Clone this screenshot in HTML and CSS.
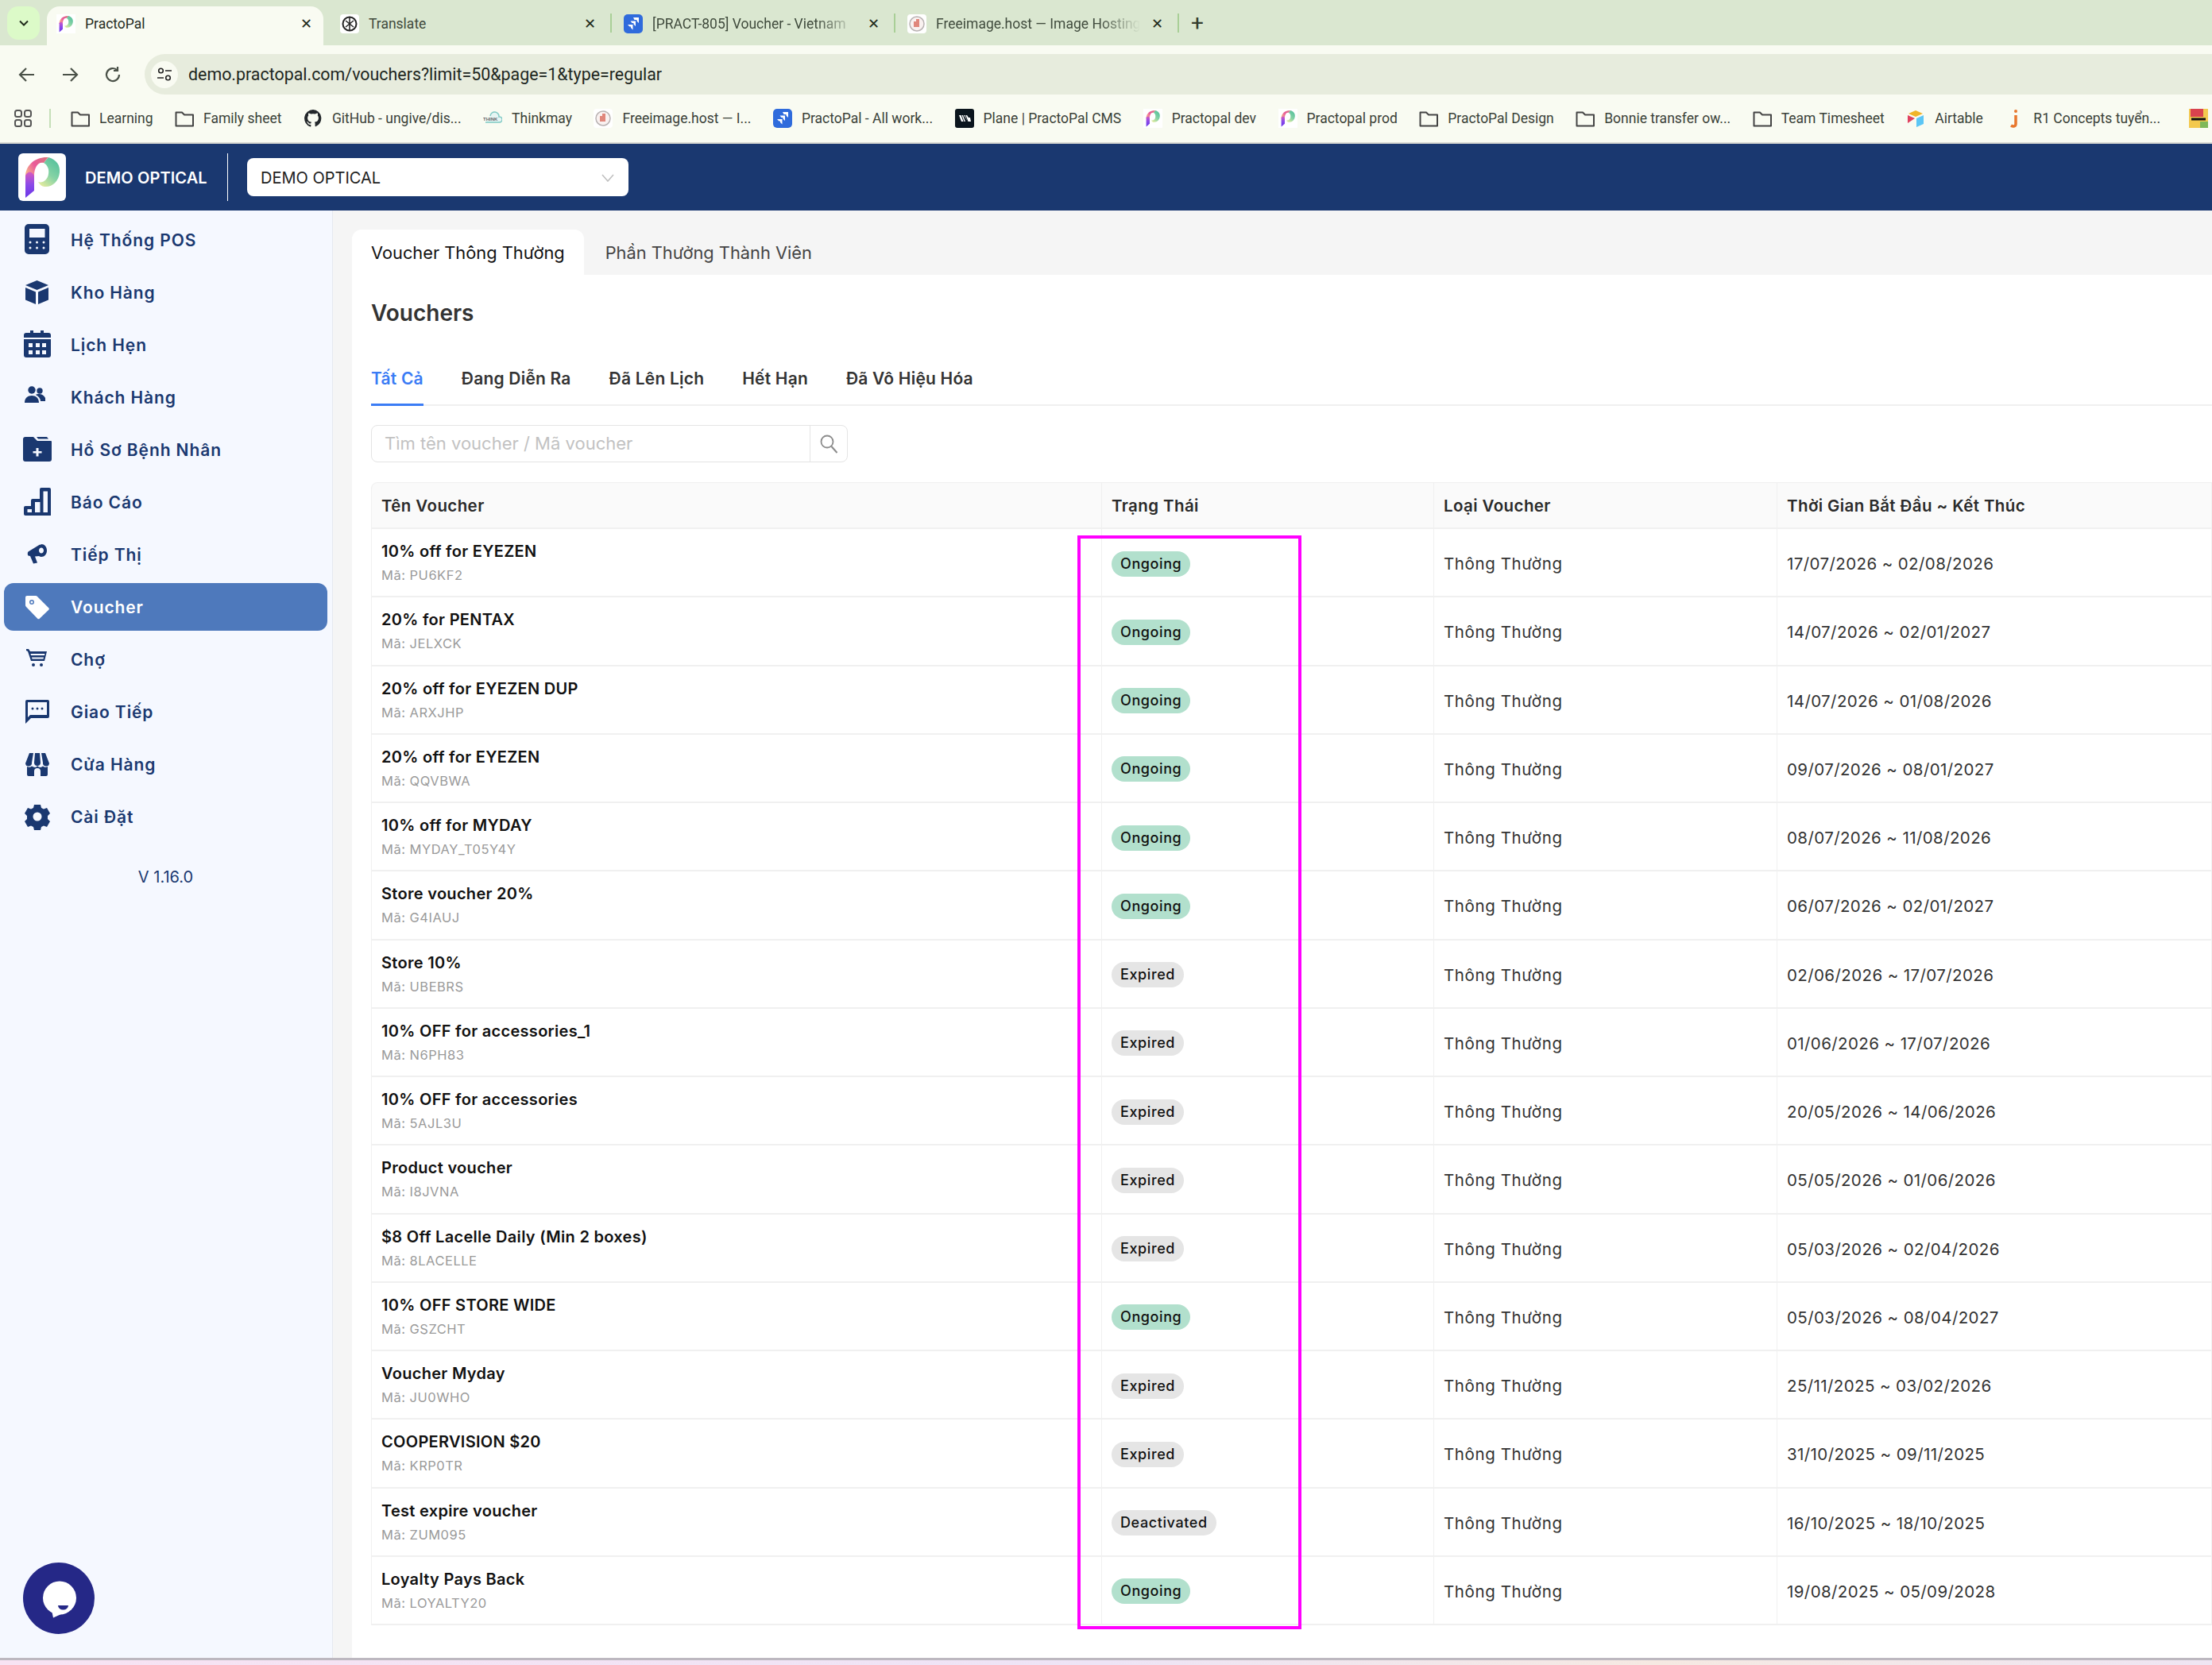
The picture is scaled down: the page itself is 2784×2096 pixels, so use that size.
FILE: index.html
```html
<!DOCTYPE html>
<html lang="vi">

<head>
    <meta charset="UTF-8">
    <title>PractoPal</title>
    <link rel="stylesheet" href="styles.css">
</head>

<body>
    <svg class="defs" width="0" height="0">
        <defs>
            <linearGradient id="pp" x1="0" y1="0.600" x2="1" y2="0.200">
                <stop offset="0" stop-color="#f4a98c" />
                <stop offset="0.400" stop-color="#ea5a9a" />
                <stop offset="1" stop-color="#d8737f" />
            </linearGradient>
            <linearGradient id="pp2" x1="0" y1="0" x2="0" y2="1">
                <stop offset="0" stop-color="#d65ac0" />
                <stop offset="0.500" stop-color="#8a4ae8" />
                <stop offset="1" stop-color="#6a35e8" />
            </linearGradient>
            <linearGradient id="pp3" x1="0.800" y1="0" x2="0.200" y2="1">
                <stop offset="0" stop-color="#52bf9c" />
                <stop offset="0.550" stop-color="#86d3a5" />
                <stop offset="1" stop-color="#e3eb9f" />
            </linearGradient>
            <symbol id="logo" viewBox="0 0 60 60">
                <path d="M38 5C48 8 53 15 52 24C51 35 43 43 33 42C30 42 27 39 25 36C31 38 37 33 38 26C39 20 37 15 32 12Z" fill="url(#pp3)" />
                <path d="M9 28C10 14 22 4 38 5C36 7 34 9 32 12C25 10 20 18 20 28Z" fill="url(#pp)" />
                <path d="M9 28C12 22 17 22 20 28V47L9 56Z" fill="url(#pp2)" />
            </symbol>
            <symbol id="folder" viewBox="0 0 24 24">
                <path d="M1.500 4.500h7.500l3 3h11v14h-21.500z" fill="none" stroke="#444" stroke-width="2" stroke-linejoin="round" />
            </symbol>
            <symbol id="jira" viewBox="0 0 24 24">
                <rect width="24" height="24" rx="5" fill="#2f6bdc" />
                <path d="M12 4h7v7l-2.500-2.500V7h-3zM8.500 8.500H15v6.500l-2.500-2.500V11h-2zM5 13h6.500v6.500L9 17v-1.500H7.500z" fill="#fff" />
            </symbol>
            <symbol id="freeimage" viewBox="0 0 24 24">
                <rect width="24" height="24" rx="4" fill="#fff" />
                <circle cx="12" cy="12" r="9" fill="#f9f1f0" stroke="#b9b3b3" stroke-width="1.500" />
                <path d="M8 16V9h3V6h4v10z" fill="#e0877c" />
            </symbol>
        </defs>
    </svg>

    <div class="tabstrip">
        <div class="tab-search"><svg width="16" height="16" viewBox="0 0 16 16"><path d="M3 5.500l5 5 5-5" fill="none" stroke="#1f2a1a" stroke-width="2" /></svg></div>
        <div class="tab tab-active">
            <svg class="favicon" width="24" height="24"><rect width="24" height="24" fill="#fff" /><use href="#logo" width="24" height="24" /></svg>
            <span class="tab-title">PractoPal</span>
            <span class="tab-close">✕</span>
        </div>
        <div class="tab">
            <svg class="favicon" width="24" height="24" viewBox="0 0 24 24"><rect width="24" height="24" rx="4" fill="#fff" /><circle cx="12" cy="12" r="8.500" fill="none" stroke="#222" stroke-width="2" /><path d="M7 8l10 8M17 8l-10 8M12 4v16" stroke="#222" stroke-width="1.500" /></svg>
            <span class="tab-title">Translate</span>
            <span class="tab-close">✕</span>
        </div>
        <div class="tab tab-sep">
            <svg class="favicon" width="24" height="24"><use href="#jira" /></svg>
            <span class="tab-title tab-fade">[PRACT-805] Voucher - Vietnam</span>
            <span class="tab-close">✕</span>
        </div>
        <div class="tab tab-sep">
            <svg class="favicon" width="24" height="24"><use href="#freeimage" /></svg>
            <span class="tab-title tab-fade">Freeimage.host — Image Hosting</span>
            <span class="tab-close">✕</span>
        </div>
        <div class="tab-new">+</div>
    </div>

    <div class="toolbar">
        <svg class="nav-icon" width="24" height="24" viewBox="0 0 24 24"><path d="M21 12H4M11 4l-8 8 8 8" fill="none" stroke="#4a5148" stroke-width="2.200" /></svg>
        <svg class="nav-icon" width="24" height="24" viewBox="0 0 24 24"><path d="M3 12h17M13 4l8 8-8 8" fill="none" stroke="#4a5148" stroke-width="2.200" /></svg>
        <svg class="nav-icon" width="24" height="24" viewBox="0 0 24 24"><path d="M20 12a8 8 0 1 1-2.500-5.800M18 2v5h-5" fill="none" stroke="#4a5148" stroke-width="2.200" /></svg>
        <div class="address">
            <div class="site-info"><svg width="20" height="20" viewBox="0 0 20 20"><circle cx="5.500" cy="5" r="2.800" fill="none" stroke="#222" stroke-width="1.600" /><path d="M11 5h8M1 14h8" stroke="#222" stroke-width="1.600" /><circle cx="14.500" cy="14" r="2.800" fill="none" stroke="#222" stroke-width="1.600" /></svg></div>
            <span class="url">demo.practopal.com/vouchers?limit=50&amp;page=1&amp;type=regular</span>
        </div>
    </div>

    <div class="bookmarks">
        <svg class="apps" width="22" height="22" viewBox="0 0 22 22"><g fill="none" stroke="#555" stroke-width="2"><rect x="1" y="1" width="8" height="8" rx="2.500" /><rect x="13" y="1" width="8" height="8" rx="2.500" /><rect x="1" y="13" width="8" height="8" rx="2.500" /><rect x="13" y="13" width="8" height="8" rx="2.500" /></g></svg>
        <span class="bm-sep"></span>
        <a class="bm"><svg width="24" height="24"><use href="#folder" /></svg>Learning</a>
        <a class="bm"><svg width="24" height="24"><use href="#folder" /></svg>Family sheet</a>
        <a class="bm"><svg width="24" height="24" viewBox="0 0 24 24"><path d="M12 1a11 11 0 0 0-3.500 21.400c.6.100.8-.2.800-.5v-2c-3 .7-3.700-1.400-3.700-1.400-.5-1.300-1.200-1.600-1.200-1.600-1-.7.100-.7.100-.7 1.100.1 1.700 1.100 1.700 1.100 1 1.700 2.600 1.200 3.200.9.100-.7.400-1.200.7-1.500-2.400-.3-5-1.200-5-5.400 0-1.200.4-2.100 1.100-2.900-.1-.3-.5-1.400.1-2.900 0 0 .9-.3 3 1.100a10.400 10.400 0 0 1 5.400 0c2.100-1.400 3-1.100 3-1.100.6 1.500.2 2.600.1 2.900.7.800 1.100 1.700 1.100 2.900 0 4.200-2.600 5.100-5 5.400.4.300.7 1 .7 2v3c0 .3.200.6.800.5A11 11 0 0 0 12 1z" fill="#23272b" /></svg>GitHub - ungive/dis...</a>
        <a class="bm"><svg width="24" height="24" viewBox="0 0 24 24"><path d="M9 9a5 5 0 0 1 11 1 3.500 3.500 0 0 1 1 7H3" fill="#e6f5f3" stroke="#7fc9c4" stroke-width="1.500" /><text x="0" y="15" class="think">THINK</text></svg>Thinkmay</a>
        <a class="bm"><svg width="24" height="24"><use href="#freeimage" /></svg>Freeimage.host — I...</a>
        <a class="bm"><svg width="24" height="24"><use href="#jira" /></svg>PractoPal - All work...</a>
        <a class="bm"><svg width="24" height="24" viewBox="0 0 24 24"><rect width="24" height="24" rx="3" fill="#0b151d" /><path d="M5 8h5l3 8H8zM11 8h4l2 3h2l1 5h-4z" fill="#fff" /><path d="M8 8l3 8M13 8l3 8" stroke="#0b151d" /></svg>Plane | PractoPal CMS</a>
        <a class="bm"><svg width="24" height="24"><rect width="24" height="24" fill="#fff" /><use href="#logo" width="24" height="24" /></svg>Practopal dev</a>
        <a class="bm"><svg width="24" height="24"><rect width="24" height="24" fill="#fff" /><use href="#logo" width="24" height="24" /></svg>Practopal prod</a>
        <a class="bm"><svg width="24" height="24"><use href="#folder" /></svg>PractoPal Design</a>
        <a class="bm"><svg width="24" height="24"><use href="#folder" /></svg>Bonnie transfer ow...</a>
        <a class="bm"><svg width="24" height="24"><use href="#folder" /></svg>Team Timesheet</a>
        <a class="bm"><svg width="24" height="24" viewBox="0 0 24 24"><path d="M12 2l9 4-9 4-9-4z" fill="#f0b429" /><path d="M13 12l9-4v11l-9 4z" fill="#5cc6f5" /><path d="M2 8l9 4-9 6z" fill="#e0415f" /></svg>Airtable</a>
        <a class="bm"><svg width="24" height="24" viewBox="0 0 24 24"><path d="M14 8v11c0 3-3 4-6 2" fill="none" stroke="#e8772e" stroke-width="3.500" /><circle cx="14" cy="3" r="2" fill="#e8772e" /></svg>R1 Concepts tuyển...</a>
        <svg class="bm-last" width="24" height="24" viewBox="0 0 24 24"><rect width="24" height="24" fill="#f3c94f" /><rect width="16" height="10" x="2" fill="#d9434e" /><rect width="10" height="8" x="14" y="16" fill="#7fb85a" /><path d="M3 13h18" stroke="#111" stroke-width="3" /></svg>
    </div>

    <header class="topbar">
        <div class="brand-logo"><svg width="60" height="60"><use href="#logo" /></svg></div>
        <span class="brand-name">DEMO OPTICAL</span>
        <span class="brand-sep"></span>
        <div class="store-select">
            <span>DEMO OPTICAL</span>
            <svg width="16" height="10" viewBox="0 0 16 10"><path d="M1 1l7 8 7-8" fill="none" stroke="#bdbdbd" stroke-width="1.500" /></svg>
        </div>
    </header>

    <div class="app">
        <aside class="sidebar">
            <nav class="menu">
                <a class="menu-item"><svg width="44" height="44" viewBox="0 0 44 44"><path fill-rule="evenodd" d="M11 2h21a5 5 0 0 1 5 5v28a5 5 0 0 1-5 5H11a5 5 0 0 1-5-5V7a5 5 0 0 1 5-5zM12 8v11h19.500V8z" /><g fill="#f5f8ff"><circle cx="13" cy="25" r="1.500" /><circle cx="21.500" cy="25" r="1.500" /><circle cx="30" cy="25" r="1.500" /><circle cx="13" cy="32" r="1.500" /><circle cx="21.500" cy="32" r="1.500" /><circle cx="30" cy="32" r="1.500" /></g></svg>Hệ Thống POS</a>
                <a class="menu-item"><svg width="44" height="44" viewBox="0 0 44 44"><path d="M21.500 7L36 13 21.500 19 7 13zM7 16l13 5.500V37L7 31.500zM23 21.500L36 16v15.500L23 37z" /></svg>Kho Hàng</a>
                <a class="menu-item"><svg width="44" height="44" viewBox="0 0 44 44"><path fill-rule="evenodd" d="M13 4h4v3h9V4h4v3h6a3 3 0 0 1 3 3v3H5v-3a3 3 0 0 1 3-3h5zM5 15h34v20a3 3 0 0 1-3 3H8a3 3 0 0 1-3-3zM11 20v5h5v-5zM20 20v5h5v-5zM28 20v5h5v-5zM11 29v5h5v-5zM20 29v5h5v-5zM28 29v5h5v-5z" /></svg>Lịch Hẹn</a>
                <a class="menu-item"><svg width="44" height="44" viewBox="0 0 44 44"><circle cx="15" cy="13" r="4.700" /><circle cx="25" cy="14" r="3.700" /><path d="M6 29c0-6 4-9 9-9s9 3 9 9zM20 19c2-1.500 9-2 12 4v4h-6c0-3-2-6-6-8z" /></svg>Khách Hàng</a>
                <a class="menu-item"><svg width="44" height="44" viewBox="0 0 44 44"><path fill-rule="evenodd" d="M7 6h10l5 5h17a1 1 0 0 1 1 1v22a3 3 0 0 1-3 3H7a3 3 0 0 1-3-3V9a3 3 0 0 1 3-3zM20.500 20v4h-4v2.500h4v4h3v-4h4V24h-4v-4z" /><path d="M21 6h13l2 2.500H23z" /></svg>Hồ Sơ Bệnh Nhân</a>
                <a class="menu-item"><svg width="44" height="44" viewBox="0 0 44 44"><path fill-rule="evenodd" d="M27 4h10a2 2 0 0 1 2 2v33H7a2 2 0 0 1-2-2v-8a2 2 0 0 1 2-2h7v-7a2 2 0 0 1 2-2h9V6a2 2 0 0 1 2-2zM29.500 8.500V35h5.500V8.500zM19 22v13h6.500V22zM9.500 31v4H15v-4z" /></svg>Báo Cáo</a>
                <a class="menu-item"><svg width="44" height="44" viewBox="0 0 44 44"><path fill-rule="evenodd" d="M27 9c4 0 7 3.500 7 8s-3 8-7 8c-1 0-2-.3-3-1l-5 .5 3 8-5 1-4-9.500-2.500-.5c-1-1-1-4 0-5l13-8c1-.7 2-1 3.500-1zM27 13.500c-1.700 0-3 1.600-3 3.500s1.300 3.500 3 3.500 3-1.600 3-3.500-1.300-3.500-3-3.500z" /></svg>Tiếp Thị</a>
                <a class="menu-item menu-active"><svg width="44" height="44" viewBox="0 0 44 44"><path fill-rule="evenodd" d="M9 8h11a3 3 0 0 1 2 1l14 14a2 2 0 0 1 0 3L25 36.500a2 2 0 0 1-3 0L8 22a3 3 0 0 1-1-2V10a2 2 0 0 1 2-2zM15 13a3 3 0 1 0 0 6 3 3 0 0 0 0-6zM15 14.500a1.500 1.500 0 1 1 0 3 1.500 1.500 0 0 1 0-3z" /></svg>Voucher</a>
                <a class="menu-item"><svg width="44" height="44" viewBox="0 0 44 44"><path fill-rule="evenodd" d="M8 9h3l2 3 21 0-3 12H14l-4-12-2-1zM13.500 15l.5 2h17l.5-2zM15 19.500l.5 2h14l.5-2z" /><circle cx="17" cy="29" r="2" /><circle cx="27" cy="29" r="2" /></svg>Chợ</a>
                <a class="menu-item"><svg width="44" height="44" viewBox="0 0 44 44"><path fill-rule="evenodd" d="M9 7h26a2 2 0 0 1 2 2v19a2 2 0 0 1-2 2H14l-7 7V9a2 2 0 0 1 2-2zM10 10v19l3-3h21V10z" /><circle cx="16" cy="18" r="1.500" /><circle cx="22" cy="18" r="1.500" /><circle cx="28" cy="18" r="1.500" /></svg>Giao Tiếp</a>
                <a class="menu-item"><svg width="44" height="44" viewBox="0 0 44 44"><path fill-rule="evenodd" d="M12 8h5l-2 12a4 4 0 0 1-8 1zM19 8h6l1 12a4 4 0 0 1-8 0zM27 8h5l5 13a4 4 0 0 1-8-1zM9 25c2 1 4 1 6-.5 3 2 6 2 7-.5 2 2.500 5 2.500 7 .5 2 1.500 4 1.500 6 .5v10a2 2 0 0 1-2 2H11a2 2 0 0 1-2-2zM18 37h8v-6a4 4 0 0 0-8 0z" /></svg>Cửa Hàng</a>
                <a class="menu-item"><svg width="44" height="44" viewBox="0 0 44 44"><g transform="translate(22 22)"><path fill-rule="evenodd" d="M-4-15h8l1 4 3 1.500 4-1.500 4 7-3 3v4l3 3-4 7-4-1.500-3 1.500-1 4h-8l-1-4-3-1.500-4 1.500-4-7 3-3v-4l-3-3 4-7 4 1.500 3-1.500zM0-5.500a5.500 5.500 0 1 0 0 11 5.500 5.500 0 0 0 0-11z" /></g></svg>Cài Đặt</a>
            </nav>
            <div class="version">V 1.16.0</div>
            <div class="chat-btn"><svg width="44" height="48" viewBox="0 0 44 48"><circle cx="22" cy="22.500" r="21" fill="#fff" /><path d="M12 38l2 9.500 11-5z" fill="#fff" /><path d="M20 32h13a6.500 5.500 0 0 1-13 0z" fill="#252887" /></svg></div>
        </aside>

        <main class="main">
            <div class="page-tabs">
                <a class="page-tab page-tab-active">Voucher Thông Thường</a>
                <a class="page-tab">Phần Thưởng Thành Viên</a>
            </div>
            <section class="card">
                <h1 class="title">Vouchers</h1>
                <div class="filters">
                    <a class="filter filter-active">Tất Cả</a>
                    <a class="filter">Đang Diễn Ra</a>
                    <a class="filter">Đã Lên Lịch</a>
                    <a class="filter">Hết Hạn</a>
                    <a class="filter">Đã Vô Hiệu Hóa</a>
                </div>
                <div class="search">
                    <div class="search-input">Tìm tên voucher / Mã voucher</div>
                    <div class="search-btn"><svg width="24" height="26" viewBox="0 0 24 26"><circle cx="10" cy="10" r="7.500" fill="none" stroke="#8c8c8c" stroke-width="1.800" /><path d="M15.500 16l7 8" stroke="#8c8c8c" stroke-width="2" /></svg></div>
                </div>
                <div class="table-wrap">
                    <table class="vouchers">
                        <colgroup>
                            <col class="col-name">
                            <col class="col-status">
                            <col class="col-type">
                            <col>
                        </colgroup>
                        <thead>
                            <tr>
                                <th>Tên Voucher</th>
                                <th>Trạng Thái</th>
                                <th>Loại Voucher</th>
                                <th>Thời Gian Bắt Đầu ~ Kết Thúc</th>
                            </tr>
                        </thead>
                        <tbody>
                            <tr><td><div class="v-name">10% off for EYEZEN</div><div class="v-code">Mã: PU6KF2</div></td><td><span class="badge ongoing">Ongoing</span></td><td>Thông Thường</td><td>17/07/2026 ~ 02/08/2026</td></tr>
                            <tr><td><div class="v-name">20% for PENTAX</div><div class="v-code">Mã: JELXCK</div></td><td><span class="badge ongoing">Ongoing</span></td><td>Thông Thường</td><td>14/07/2026 ~ 02/01/2027</td></tr>
                            <tr><td><div class="v-name">20% off for EYEZEN DUP</div><div class="v-code">Mã: ARXJHP</div></td><td><span class="badge ongoing">Ongoing</span></td><td>Thông Thường</td><td>14/07/2026 ~ 01/08/2026</td></tr>
                            <tr><td><div class="v-name">20% off for EYEZEN</div><div class="v-code">Mã: QQVBWA</div></td><td><span class="badge ongoing">Ongoing</span></td><td>Thông Thường</td><td>09/07/2026 ~ 08/01/2027</td></tr>
                            <tr><td><div class="v-name">10% off for MYDAY</div><div class="v-code">Mã: MYDAY_T05Y4Y</div></td><td><span class="badge ongoing">Ongoing</span></td><td>Thông Thường</td><td>08/07/2026 ~ 11/08/2026</td></tr>
                            <tr><td><div class="v-name">Store voucher 20%</div><div class="v-code">Mã: G4IAUJ</div></td><td><span class="badge ongoing">Ongoing</span></td><td>Thông Thường</td><td>06/07/2026 ~ 02/01/2027</td></tr>
                            <tr><td><div class="v-name">Store 10%</div><div class="v-code">Mã: UBEBRS</div></td><td><span class="badge expired">Expired</span></td><td>Thông Thường</td><td>02/06/2026 ~ 17/07/2026</td></tr>
                            <tr><td><div class="v-name">10% OFF for accessories_1</div><div class="v-code">Mã: N6PH83</div></td><td><span class="badge expired">Expired</span></td><td>Thông Thường</td><td>01/06/2026 ~ 17/07/2026</td></tr>
                            <tr><td><div class="v-name">10% OFF for accessories</div><div class="v-code">Mã: 5AJL3U</div></td><td><span class="badge expired">Expired</span></td><td>Thông Thường</td><td>20/05/2026 ~ 14/06/2026</td></tr>
                            <tr><td><div class="v-name">Product voucher</div><div class="v-code">Mã: I8JVNA</div></td><td><span class="badge expired">Expired</span></td><td>Thông Thường</td><td>05/05/2026 ~ 01/06/2026</td></tr>
                            <tr><td><div class="v-name">$8 Off Lacelle Daily (Min 2 boxes)</div><div class="v-code">Mã: 8LACELLE</div></td><td><span class="badge expired">Expired</span></td><td>Thông Thường</td><td>05/03/2026 ~ 02/04/2026</td></tr>
                            <tr><td><div class="v-name">10% OFF STORE WIDE</div><div class="v-code">Mã: GSZCHT</div></td><td><span class="badge ongoing">Ongoing</span></td><td>Thông Thường</td><td>05/03/2026 ~ 08/04/2027</td></tr>
                            <tr><td><div class="v-name">Voucher Myday</div><div class="v-code">Mã: JU0WHO</div></td><td><span class="badge expired">Expired</span></td><td>Thông Thường</td><td>25/11/2025 ~ 03/02/2026</td></tr>
                            <tr><td><div class="v-name">COOPERVISION $20</div><div class="v-code">Mã: KRP0TR</div></td><td><span class="badge expired">Expired</span></td><td>Thông Thường</td><td>31/10/2025 ~ 09/11/2025</td></tr>
                            <tr><td><div class="v-name">Test expire voucher</div><div class="v-code">Mã: ZUM095</div></td><td><span class="badge expired">Deactivated</span></td><td>Thông Thường</td><td>16/10/2025 ~ 18/10/2025</td></tr>
                            <tr><td><div class="v-name">Loyalty Pays Back</div><div class="v-code">Mã: LOYALTY20</div></td><td><span class="badge ongoing">Ongoing</span></td><td>Thông Thường</td><td>19/08/2025 ~ 05/09/2028</td></tr>
                        </tbody>
                    </table>
                    <div class="highlight"></div>
                </div>
            </section>
        </main>
    </div>

    <div class="taskbar"></div>
</body>

</html>
```

FILE: styles.css
```css
* {
    box-sizing: border-box;
}

body {
    margin: 0;
    height: 100vh;
    display: flex;
    flex-direction: column;
    overflow: hidden;
    font-family: Inter, "Noto Sans", sans-serif;
    background-color: #f5f5f5;
}

.defs {
    position: absolute;
}

/* browser window */
.tabstrip {
    height: 57px;
    flex: none;
    display: flex;
    align-items: flex-start;
    background-color: #dae7d0;
    padding: 8px 0 0 9px;
    font-family: Roboto, sans-serif;
    font-size: 17.500px;
    color: #3f4a3c;
}

.tab-search {
    width: 41px;
    height: 42px;
    margin-right: 4px;
    display: flex;
    align-items: center;
    justify-content: center;
    background-color: #dcfac8;
    border-radius: 14px;
}

.tab {
    width: 357px;
    height: 49px;
    flex: none;
    display: flex;
    align-items: center;
    padding: 0 18px 6px 17px;
    position: relative;
}

.tab-active {
    width: 348px;
    margin: 0 4px 0 5px;
    padding-left: 12px;
    padding-right: 14px;
    background-color: #f9fbf2;
    border-radius: 16px 16px 0 0;
    color: #262d24;
}

.tab-sep::before {
    content: "";
    position: absolute;
    left: 0;
    top: 9px;
    height: 24px;
    border-left: 2px solid #a9cf97;
}

.favicon {
    flex: none;
}

.tab-title {
    flex: 1;
    margin-left: 12px;
    white-space: nowrap;
    overflow: hidden;
}

.tab-fade {
    margin-right: 14px;
    -webkit-mask-image: linear-gradient(90deg, #000 80%, transparent);
    mask-image: linear-gradient(90deg, #000 80%, transparent);
}

.tab-close {
    font-size: 18px;
    color: #1f2a1a;
}

.tab-new {
    position: relative;
    font-size: 28px;
    line-height: 42px;
    margin-left: 0;
    padding-left: 17px;
    color: #333d2e;
}

.tab-new::before {
    content: "";
    position: absolute;
    left: 0;
    top: 9px;
    height: 24px;
    border-left: 2px solid #a9cf97;
}

.toolbar {
    height: 62px;
    flex: none;
    display: flex;
    align-items: flex-end;
    padding-left: 22px;
    background-color: #f9fbf2;
}

.nav-icon {
    margin-right: 30px;
    margin-bottom: 13px;
}

.nav-icon:nth-child(3) {
    margin-right: 28px;
}

.address {
    flex: 1;
    height: 51px;
    display: flex;
    align-items: center;
    padding-left: 8px;
    background-color: #e7ecdd;
    border-radius: 26px 0 0 26px;
}

.site-info {
    width: 34px;
    height: 34px;
    border-radius: 50%;
    display: flex;
    align-items: center;
    justify-content: center;
    background-color: #f9fbf2;
}

.url {
    margin-left: 13px;
    font-family: Roboto, sans-serif;
    font-size: 21.400px;
    color: #20261d;
}

.bookmarks {
    height: 62px;
    flex: none;
    display: flex;
    align-items: center;
    padding: 0 0 0 18px;
    background-color: #f9fbf2;
    border-bottom: 2px solid #d9d9d3;
    font-family: Roboto, sans-serif;
    font-size: 17.500px;
    color: #3a4138;
    white-space: nowrap;
}

.bookmarks > * {
    flex: none;
}

.think {
    font-family: "Liberation Sans", sans-serif;
    font-size: 6px;
    font-weight: 700;
    fill: #666;
}

.bm-sep {
    height: 24px;
    margin: 0 25px 0 22px;
    border-left: 2px solid #c5dfb8;
}

.bm {
    display: flex;
    align-items: center;
    gap: 12px;
    margin-right: 27.500px;
}

.bm-last {
    margin-left: 8px;
}

/* app header */
.topbar {
    height: 84px;
    flex: none;
    display: flex;
    align-items: center;
    padding-left: 23px;
    background-color: #1a3870;
}

.brand-logo {
    width: 60px;
    height: 60px;
    background-color: #fff;
    border-radius: 6px;
}

.brand-name {
    width: 203px;
    padding: 2px 0 0 24px;
    color: #fff;
    font-size: 20px;
    font-weight: 600;
    letter-spacing: 0.100px;
    white-space: nowrap;
}

.brand-sep {
    height: 60px;
    margin-right: 24px;
    border-left: 1px solid #fff;
}

.store-select {
    width: 480px;
    height: 48px;
    display: flex;
    align-items: center;
    justify-content: space-between;
    padding: 2px 18px 0 17px;
    background-color: #fff;
    border-radius: 8px;
    font-size: 20px;
    color: #222;
}

.app {
    flex: 1;
    display: flex;
    min-height: 0;
}

/* sidebar */
.sidebar {
    width: 419px;
    flex: none;
    position: relative;
    padding-top: 7px;
    background-color: #f5f8ff;
    border-right: 1px solid #e6e9f0;
}

.menu {
    display: flex;
    flex-direction: column;
    gap: 6px;
    padding: 0 6px 0 5px;
}

.menu-item {
    height: 60px;
    display: flex;
    align-items: center;
    gap: 20px;
    padding-left: 20px;
    border-radius: 12px;
    color: #1a3870;
    font-size: 21px;
    font-weight: 600;
    letter-spacing: 0.900px;
    white-space: nowrap;
}

.menu-item svg {
    flex: none;
    fill: currentColor;
}

.menu-active {
    background-color: #4e79bc;
    color: #fff;
}

.version {
    margin-top: 31px;
    padding-right: 1px;
    text-align: center;
    line-height: 30px;
    font-size: 20px;
    color: #1a3870;
}

.chat-btn {
    position: absolute;
    left: 29px;
    bottom: 30px;
    width: 90px;
    height: 90px;
    display: flex;
    align-items: center;
    justify-content: center;
    padding: 1px 0 0 1px;
    border-radius: 50%;
    background-color: #252887;
}

/* page */
.main {
    flex: 1;
    min-width: 0;
    display: flex;
    flex-direction: column;
    padding: 24px 0 0 24px;
}

.page-tabs {
    height: 57px;
    flex: none;
    display: flex;
}

.page-tab {
    display: flex;
    align-items: center;
    padding: 0 24px;
    font-size: 21.800px;
    color: #444;
    white-space: nowrap;
    border-radius: 12px 12px 0 0;
}

.page-tab + .page-tab {
    padding-left: 27px;
}

.page-tab-active {
    background-color: #fff;
    color: #111;
}

.card {
    flex: 1;
    padding: 28px 0 0 24px;
    background-color: #fff;
}

.title {
    margin: 0;
    font-size: 28px;
    line-height: 40px;
    font-weight: 600;
    color: #333;
}

.filters {
    height: 67px;
    margin-top: 30px;
    display: flex;
    gap: 48px;
    border-bottom: 2px solid #f0f0f0;
}

.filter {
    height: 67px;
    line-height: 66px;
    font-size: 21px;
    font-weight: 600;
    letter-spacing: 0.200px;
    color: #333;
    white-space: nowrap;
}

.filter-active {
    color: #3b7cf5;
    border-bottom: 3px solid #3b7cf5;
}

.search {
    width: 600px;
    height: 47px;
    margin-top: 24px;
    display: flex;
    border: 1.500px solid #e4e4e4;
    border-radius: 8px;
}

.search-input {
    flex: 1;
    padding-left: 16px;
    line-height: 44px;
    font-size: 22px;
    color: #c2c2c2;
}

.search-btn {
    width: 47px;
    display: flex;
    align-items: center;
    justify-content: center;
    border-left: 1px solid #e4e4e4;
}

.table-wrap {
    position: relative;
    margin-top: 25px;
}

.vouchers {
    width: 100%;
    table-layout: fixed;
    border-collapse: separate;
    border-spacing: 0;
    font-size: 20.500px;
    letter-spacing: 0.600px;
    color: #333;
}

.col-name {
    width: 920px;
}

.col-status {
    width: 418px;
}

.col-type {
    width: 432px;
}

.vouchers th {
    height: 59px;
    padding: 1px 12px 0;
    text-align: left;
    font-weight: 600;
    letter-spacing: 0.400px;
    color: #2a2a2a;
    background-color: #fafafa;
    border-top: 1px solid #f0f0f0;
    border-bottom: 2px solid #f0f0f0;
    border-right: 1px solid #f0f0f0;
}

.vouchers th:first-child {
    border-top-left-radius: 8px;
}

.vouchers td {
    height: 86.250px;
    padding: 3px 12px 0;
    border-bottom: 2px solid #f0f0f0;
    border-right: 1px solid #f0f0f0;
}

.vouchers td:last-child {
    letter-spacing: 0.400px;
}

.vouchers th:first-child,
.vouchers td:first-child {
    border-left: 1px solid #f0f0f0;
}

.v-name {
    margin-top: -3px;
    font-size: 20px;
    line-height: 28px;
    font-weight: 600;
    letter-spacing: 0.300px;
    color: #111;
}

.v-code {
    margin-top: 4px;
    font-size: 16.500px;
    line-height: 24px;
    letter-spacing: 0.500px;
    color: #9a9a9a;
}

.badge {
    display: inline-block;
    height: 32px;
    padding: 0 11px;
    line-height: 32px;
    border-radius: 16px;
    font-size: 18px;
    font-weight: 500;
    letter-spacing: 0.600px;
    color: #111;
}

.ongoing {
    background-color: #b2e0cd;
}

.expired {
    background-color: #e5e5e5;
}

.highlight {
    position: absolute;
    left: 889px;
    top: 67px;
    width: 282px;
    height: 1377px;
    border: 4px solid #ff00ff;
    pointer-events: none;
}

.taskbar {
    height: 9px;
    flex: none;
    border-top: 3px solid #bdb8c0;
    background: linear-gradient(90deg, #f8e3f3, #eee4f6 50%, #f6e9e2 75%, #efe5f3);
}
```
